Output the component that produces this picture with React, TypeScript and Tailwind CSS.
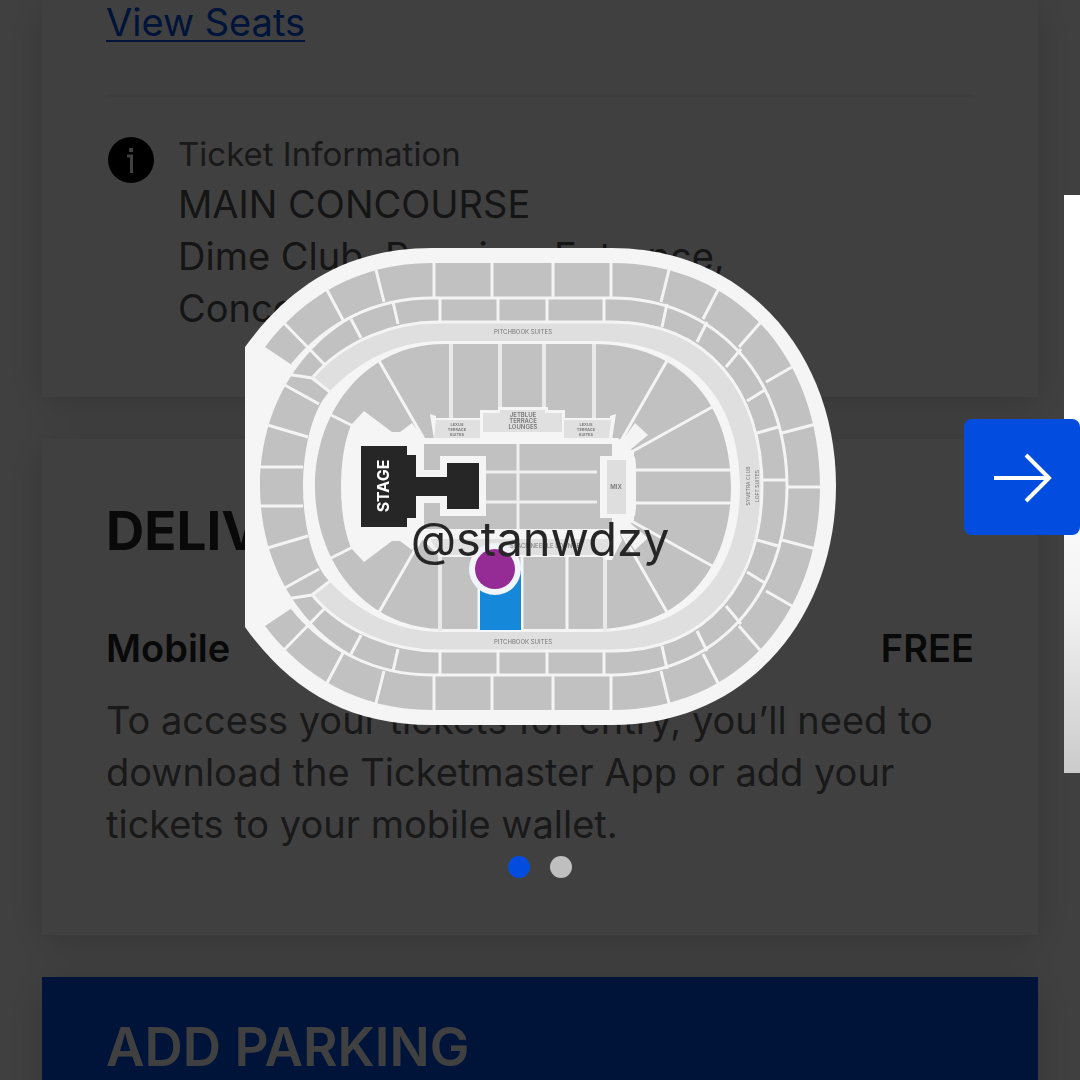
import { useState } from "react";

// Upper half of the bowl, drawn once and mirrored for the lower half
function SeatingHalf() {
  return (
    <g>
      {/* upper deck */}
      <path
        fill="#c1c1c1"
        d="M265 347 C303 297 358 263 432 263 H612 C735 263 820 355 820 487 H787 C787 375 714 297 612 297 H432 C375 297 326 323 292 365 Z"
      />
      {/* middle deck */}
      <path
        fill="#c1c1c1"
        d="M260 487 C260 375 340 297 432 297 H612 C714 297 787 375 787 487 H763 C763 391 708 321 612 321 H438 C395 322 345 340 313 377 L329 392 C312 410 303 450 303 487 Z"
      />
      {/* suites ring */}
      <path
        fill="#dfdfdf"
        d="M438 323 H612 C707 323 761 391 761 487 H740 C740 396 687 341 596 341 H442 C395 341 358 362 330 391 L313 377 C345 340 395 323 438 323 Z"
      />
      {/* lower bowl */}
      <path
        fill="#c1c1c1"
        d="M315 487 C315 410 366 344 444 344 H594 C680 344 731 402 731 487 H636 V466 Q636 452 626 446 L621 440 H425 L412 423 L400 432 H392 L364 411 L351 425 Q341 450 341 487 Z"
      />
      <g fill="none" stroke="#f4f4f4" strokeWidth="3">
        <path d="M292 365 C326 323 375 298 432 298 H612 C714 298 787 375 787 487" />
        <path d="M313 377 C345 340 395 322 438 322 H612 C708 322 762 391 762 487" />
        <path d="M434 263V297M492 263V297M553 263V297M611 263V297M669 270L661 302M718 290L703 319M760 323L739 347M792 367L766 382M816 424L782 433" />
        <path d="M376 270L384 302M327 290L343 320M284 323L325 365" />
        <path d="M440 298V321M498 298V321M547 298V321M604 298V321M667 304L662 327M707 322L697 342M741 349L726 367M765 390L747 401M778 427L757 433" />
        <path d="M393 302L398 324M351 319L361 338M286 374L312 378L330 392M281 383L319 404M264 424L308 437M258 467H303" />
        <path d="M327 413L353 426M378 359L428 446M668 359L618 446M714 406L626 455M634 470H732" />
      </g>
      <path fill="#f4f4f4" d="M618 446 L635 423 L648 435 L630 450 Z" />
    </g>
  );
}

function SeatMap() {
  return (
    <svg viewBox="240 239 600 490" className="h-[490px] w-[600px]" role="img" aria-label="Seat map">
      <path
        fill="#f5f5f5"
        d="M245 347 C290 285 348 248 432 248 H612 C747 248 836 355 836 486 C836 618 747 725 612 725 H432 C348 725 290 690 245 627 Z"
      />
      <SeatingHalf />
      <g transform="translate(0 973) scale(1 -1)">
        <SeatingHalf />
      </g>
      <g stroke="#f4f4f4" strokeWidth="3">
        <path d="M763 480H787M787 487H822" />
        <path stroke="#e9e9e9" strokeWidth="4" d="M451 344V420M500 344V412M544 344V412M594 344V420M440 555V631M605 555V631" />
        <path d="M479 555V631M522 555V631M567 555V631" />
      </g>

      {/* floor */}
      <path fill="#f5f5f5" d="M407 438H618L634 452V520L618 535H407Z" />
      <path fill="#c1c1c1" d="M424 444H612V456H600V517H612V531H424Z" />
      <path stroke="#efefef" strokeWidth="3" d="M518 444V531M478 472H597M478 502H597" />
      <path fill="#f5f5f5" d="M600 456H632L636 470V503L632 518H600Z" />
      <rect x="607" y="460" width="19" height="54" fill="#dedede" />

      {/* terraces above and below the floor */}
      <path fill="#f5f5f5" d="M430 414L436 416V418H480V410H498V407H548V410H565V418H610V416L616 414L612 440H434Z" />
      <path fill="#e0e0e0" d="M436 420H480V438H434ZM564 420H611L609 438H564Z" />
      <path fill="#e0e0e0" d="M483 413H500V410H545V413H562V432H483Z" />
      <path fill="#f5f5f5" d="M412 529H618L622 540L612 560H606L602 557H440L424 541Z" />
      <path fill="#e0e0e0" d="M430 539H610L606 555H440Z" />

      {/* selected section */}
      <path fill="#1688da" d="M480 570H521V630H480Z" />
      <path fill="none" stroke="#f5f9ff" strokeWidth="2" d="M479 560V631H522V560" />

      {/* stage */}
      <path
        fill="#262626"
        stroke="#f5f5f5"
        strokeWidth="14"
        paintOrder="stroke"
        d="M361 446H407V455H416V477H447V463H479V509H447V496H416V518H407V527H361Z"
      />

      <circle cx="495" cy="569" r="26" fill="#f1f4fb" />
      <circle cx="495" cy="569" r="20" fill="#952b94" />

      <g fontFamily="Inter, sans-serif" textAnchor="middle" fill="#777">
        <text fontSize="16" fontWeight="700" fill="#fff" transform="translate(389 486) rotate(-90)">
          STAGE
        </text>
        <g fontSize="6">
          <text x="523" y="334">PITCHBOOK SUITES</text>
          <text x="523" y="644">PITCHBOOK SUITES</text>
          <text x="545" y="548">SPACE NEEDLE LOUNGE</text>
          <text x="616" y="489" fontWeight="600">MIX</text>
        </g>
        <g fontSize="6" fontWeight="600">
          <text x="523" y="417">JETBLUE</text>
          <text x="523" y="423">TERRACE</text>
          <text x="523" y="429">LOUNGES</text>
        </g>
        <g fontSize="4" fontWeight="600">
          <text x="457" y="426">LEXUS</text>
          <text x="457" y="431">TERRACE</text>
          <text x="457" y="436">SUITES</text>
          <text x="586" y="426">LEXUS</text>
          <text x="586" y="431">TERRACE</text>
          <text x="586" y="436">SUITES</text>
        </g>
        <g fontSize="5">
          <text transform="translate(750 486) rotate(-90)">SYMETRA CLUB</text>
          <text transform="translate(759 486) rotate(-90)">LOFT SUITES</text>
        </g>
      </g>
    </svg>
  );
}

function InfoIcon() {
  return (
    <svg viewBox="0 0 46 46" className="mt-[7px] ml-0.5 size-[46px] shrink-0" aria-hidden="true">
      <circle cx="23" cy="23" r="23" fill="#000" />
      <rect x="21" y="11" width="4" height="4" fill="#fff" />
      <path d="M19 19H23.500V36" fill="none" stroke="#fff" strokeWidth="3" />
    </svg>
  );
}

function OrderDetails() {
  return (
    <main className="h-screen overflow-hidden bg-white px-[42px] text-[38px] leading-[52px]">
      <section className="bg-white px-16 pb-[63px] shadow-[0_6px_36px_rgba(0,0,0,0.18)]">
        <a href="#seats" className="block w-fit leading-11 text-[#024ddf] underline decoration-2 underline-offset-4">
          View Seats
        </a>
        <div className="mt-[50px] flex gap-6 border-t-3 border-[#f4f4f4] pt-[33px]">
          <InfoIcon />
          <div className="text-[#545454]">
            <h3 className="text-[33px] leading-12 text-[#646464]">Ticket Information</h3>
            <p>
              MAIN CONCOURSE
              <br />
              Dime Club, Premium Entrance,
              <br />
              Concourse
            </p>
          </div>
        </div>
      </section>

      <section className="mt-[42px] bg-white px-16 pt-16 pb-[85px] shadow-[0_6px_36px_rgba(0,0,0,0.18)]">
        <h2 className="text-[53px] leading-14 font-bold text-[#262626]">DELIVERY</h2>
        <div className="mt-[63px] flex justify-between font-semibold text-[#262626]">
          <span>Mobile</span>
          <span>FREE</span>
        </div>
        <p className="mt-5 text-[#646464]">
          To access your tickets for entry, you’ll need to download the Ticketmaster App or add your tickets to your
          mobile wallet.
        </p>
      </section>

      <section className="mt-[42px] bg-[#024ddf] px-16 pt-[42px] pb-16 shadow-[0_6px_36px_rgba(0,0,0,0.18)]">
        <h2 className="text-[53px] leading-14 font-semibold text-white">ADD PARKING</h2>
      </section>
    </main>
  );
}

export default function App() {
  const [slide, setSlide] = useState(0);

  return (
    <div className="font-['Inter',sans-serif]">
      <OrderDetails />

      <div className="fixed inset-0 flex flex-col overflow-hidden bg-black/75 pt-[195px]">
        <div className="relative flex h-[578px] pl-4">
          <div className="flex w-[calc(100%-16px)] shrink-0 items-center justify-center">
            <SeatMap />
          </div>
          <div className="w-full shrink-0 bg-linear-to-b from-white from-45% via-[#f4f4f4] via-70% to-[#cbcbcb]" />
          <button
            type="button"
            aria-label="Next"
            onClick={() => setSlide(1)}
            className="absolute top-56 right-0 flex h-[116px] w-[116px] items-center justify-center rounded-lg bg-[#024ddf] pt-0.5 pl-0.5"
          >
            <svg viewBox="0 0 58 50" className="h-[50px] w-[58px]" fill="none" stroke="#fff" strokeWidth="4">
              <path d="M0 25H55M32 2L55 25L32 48" />
            </svg>
          </button>
        </div>
        <div className="mt-[83px] flex justify-center gap-5">
          {["Seat map", "View from seat"].map((label, i) => (
            <button
              key={label}
              type="button"
              aria-label={label}
              onClick={() => setSlide(i)}
              className={`size-[22px] rounded-full ${i === slide ? "bg-[#024ddf]" : "bg-[#bfbfbf]"}`}
            />
          ))}
        </div>
      </div>

      <div className="pointer-events-none fixed inset-0 flex items-center justify-center pb-0.5 text-[47px] text-[#262626]">
        @stanwdzy
      </div>
    </div>
  );
}
